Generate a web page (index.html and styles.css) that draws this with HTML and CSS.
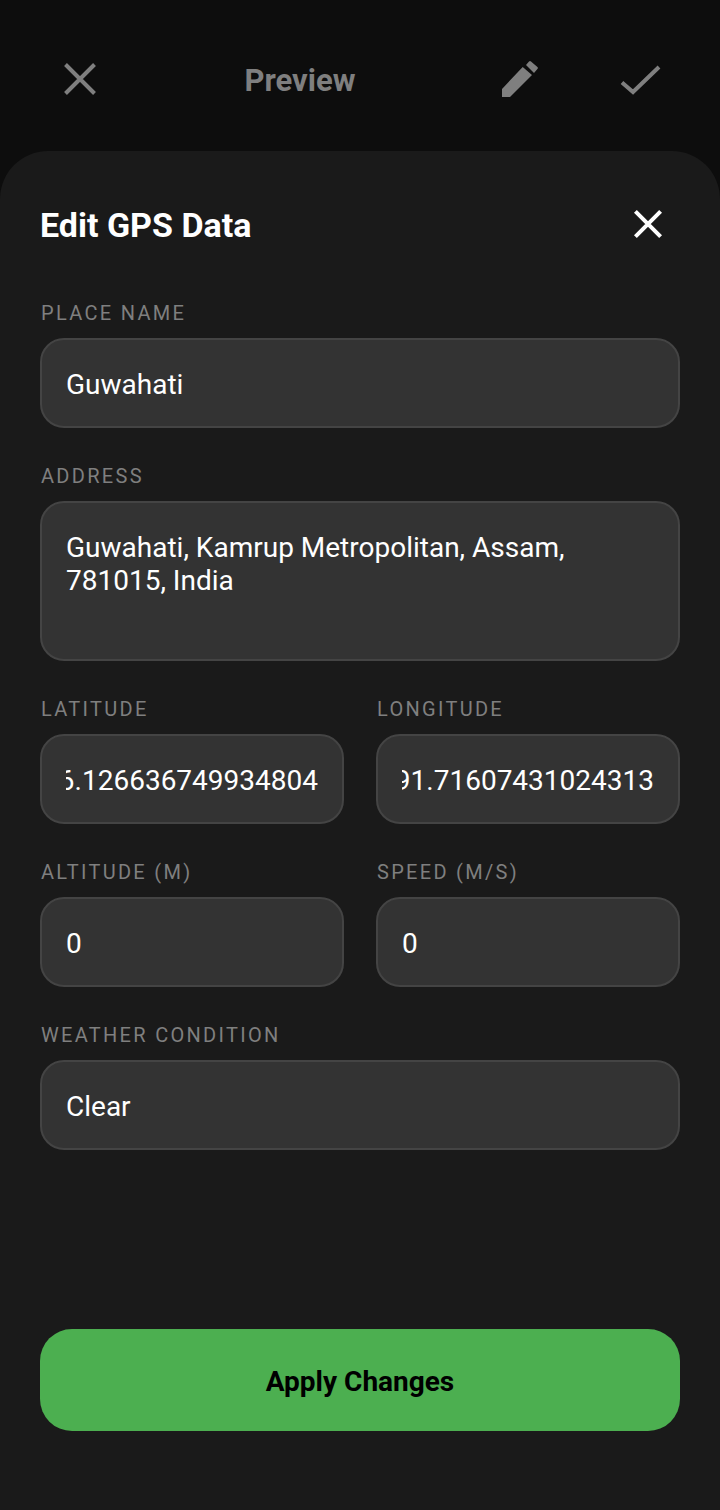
FILE: index.html
```html
<!DOCTYPE html>
<html lang="en">
<head>
<meta charset="UTF-8">
<meta name="viewport" content="width=device-width, initial-scale=1.0">
<title>Edit GPS Data</title>
<link rel="stylesheet" href="styles.css">
</head>
<body>

<div class="topbar">
    <svg class="top-icon line" viewBox="0 0 48 48"><path d="M9.5 8.5 38.5 37.5M38.5 8.5 9.5 37.5"/></svg>
    <div class="top-title">Preview</div>
    <svg class="top-icon" viewBox="0 0 48 48"><path d="M6 33 26.7 11 36 19 14 41H6zM30 9 33 5.6Q34 4.6 35 5.6L41.4 11Q42.4 12 41.4 13L38 17z"/></svg>
    <svg class="top-icon line" viewBox="0 0 48 48"><path d="M6 26.5 17 36 43 11"/></svg>
</div>

<div class="sheet">
    <div class="sheet-head">
        <h1>Edit GPS Data</h1>
        <svg class="close" viewBox="0 0 48 48"><path d="M11.4 10.4 36.6 35.6M36.6 10.4 11.4 35.6"/></svg>
    </div>

    <div class="group">
        <div class="label">PLACE NAME</div>
        <div class="field">Guwahati</div>
    </div>

    <div class="group">
        <div class="label">ADDRESS</div>
        <div class="field area">Guwahati, Kamrup Metropolitan, Assam, 781015, India</div>
    </div>

    <div class="row">
        <div class="group">
            <div class="label">LATITUDE</div>
            <div class="field"><div class="scroll"><span>26.126636749934804</span></div></div>
        </div>
        <div class="group">
            <div class="label">LONGITUDE</div>
            <div class="field"><div class="scroll"><span>91.71607431024313</span></div></div>
        </div>
    </div>

    <div class="row">
        <div class="group">
            <div class="label">ALTITUDE (M)</div>
            <div class="field">0</div>
        </div>
        <div class="group">
            <div class="label">SPEED (M/S)</div>
            <div class="field">0</div>
        </div>
    </div>

    <div class="group">
        <div class="label">WEATHER CONDITION</div>
        <div class="field">Clear</div>
    </div>

    <button class="apply">Apply Changes</button>
</div>

</body>
</html>
```

FILE: styles.css
```css
* {
    box-sizing: border-box;
}
body {
    margin: 0;
    height: 1510px;
    display: flex;
    flex-direction: column;
    overflow: hidden;
    background-color: #0d0d0d;
    font-family: Roboto, sans-serif;
    color: white;
}
.topbar {
    height: 151px;
    flex-shrink: 0;
    display: grid;
    grid-template-columns: 160px 280px 160px 80px;
    justify-items: center;
    align-items: center;
    padding-top: 9px;
}
.top-icon {
    width: 48px;
    height: 48px;
    fill: #7f7f7f;
}
.top-icon.line {
    fill: none;
    stroke: #7f7f7f;
    stroke-width: 4;
}
.top-title {
    font-size: 31px;
    font-weight: 700;
    color: #7f7f7f;
}
.sheet {
    flex: 1;
    display: flex;
    flex-direction: column;
    padding: 0 40px 79px;
    background-color: #1a1a1a;
    border-radius: 48px 48px 0 0;
}
.sheet-head {
    display: flex;
    justify-content: space-between;
    align-items: center;
    height: 48px;
    margin-top: 50px;
    margin-bottom: 52px;
}
h1 {
    margin: 0;
    font-size: 34px;
    font-weight: 700;
}
.close {
    width: 48px;
    height: 48px;
    margin-right: 8px;
    fill: none;
    stroke: white;
    stroke-width: 4;
}
.group {
    margin-bottom: 36px;
}
.row {
    display: flex;
    gap: 32px;
}
.row .group {
    flex: 1;
    min-width: 0;
}
.label {
    height: 24px;
    margin-bottom: 13px;
    padding-left: 1px;
    font-size: 20px;
    line-height: 24px;
    letter-spacing: 2.3px;
    color: #7f7f7f;
}
.field {
    height: 90px;
    padding: 2px 24px 0;
    display: flex;
    align-items: center;
    background-color: #333333;
    border: 2px solid #444444;
    border-radius: 24px;
    font-size: 28px;
}
.area {
    height: 160px;
    padding-top: 28px;
    align-items: flex-start;
    line-height: 33px;
}
.scroll {
    flex: 1;
    min-width: 0;
    display: flex;
    justify-content: flex-end;
    overflow: hidden;
    white-space: nowrap;
}
.scroll span {
    flex-shrink: 0;
}
.apply {
    height: 102px;
    margin-top: auto;
    padding-top: 4px;
    border: none;
    border-radius: 32px;
    background-color: #4caf50;
    font-family: Roboto, sans-serif;
    font-size: 28px;
    font-weight: 700;
    color: black;
}
```
